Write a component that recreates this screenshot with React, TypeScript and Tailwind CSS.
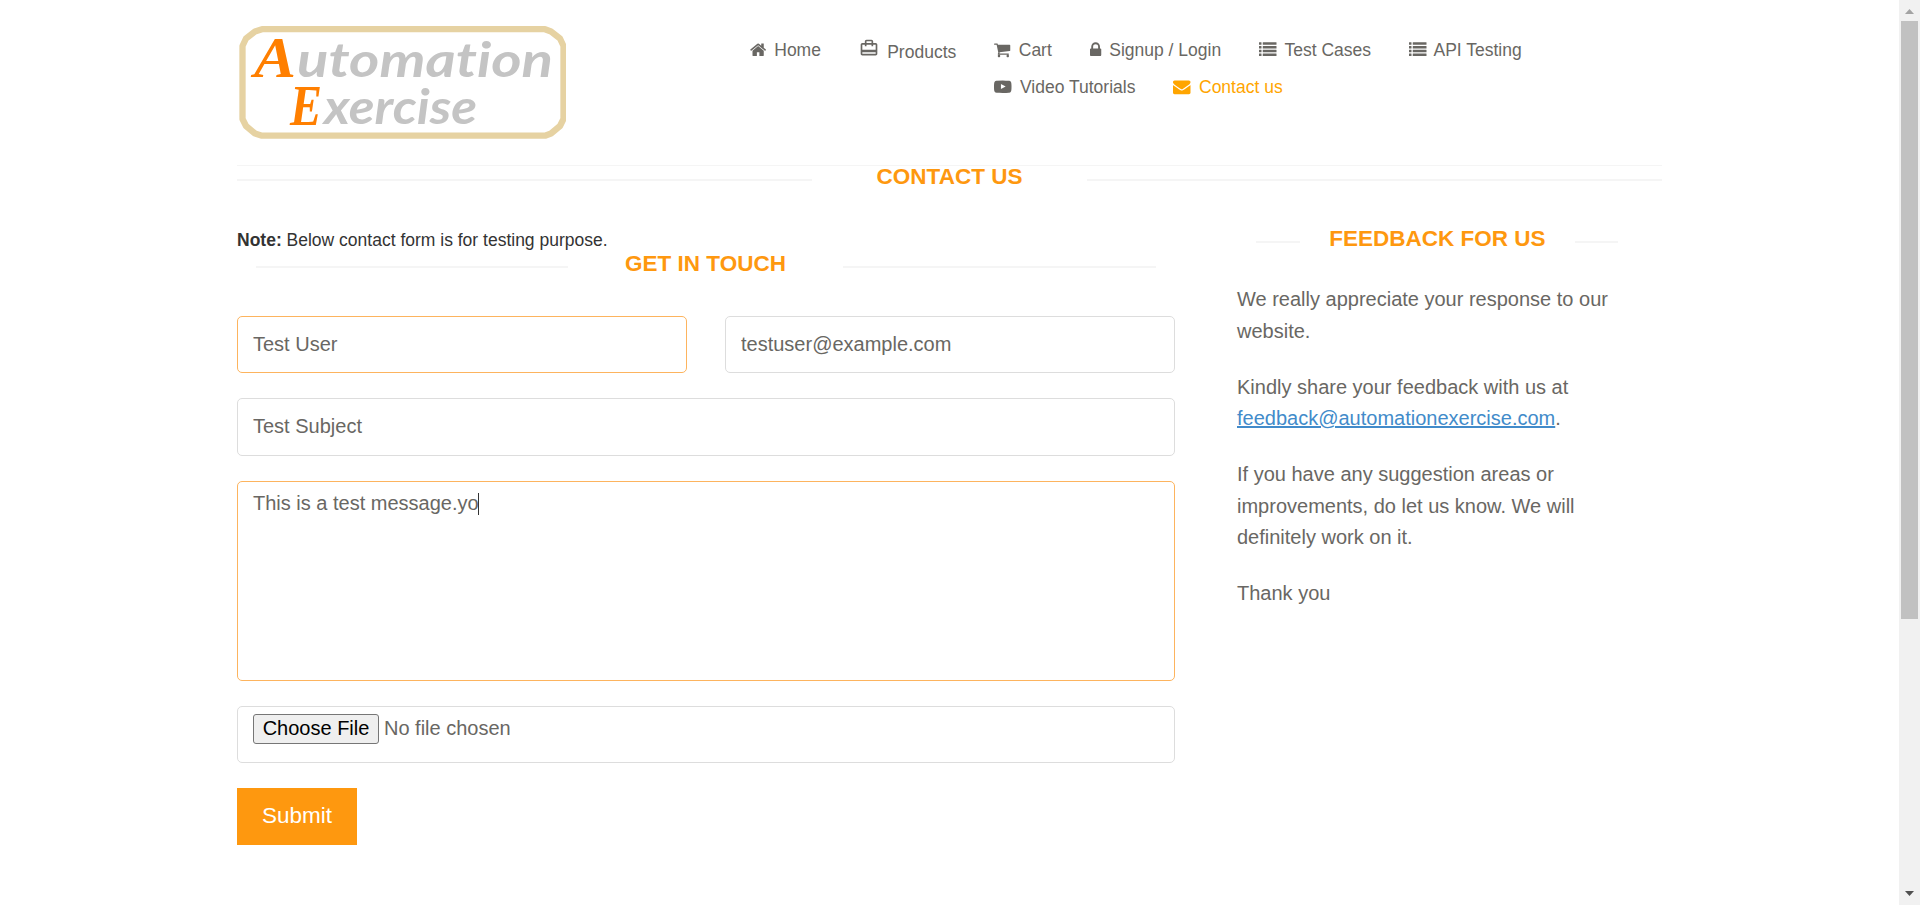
import type { ReactNode } from "react";

function Glyph({ x, w, children }: { x: number; w: number; children: ReactNode }) {
  return (
    <svg
      viewBox={`${x} 0 ${w} 1792`}
      className="h-[17.5px] shrink-0 overflow-visible"
      style={{ width: (w / 1792) * 17.5 }}
      fill="currentColor"
    >
      {children}
    </svg>
  );
}

const HomeIcon = () => (
  <Glyph x={0} w={1664}>
    <path d="M1408 992v480q0 26-19 45t-45 19h-384v-384h-256v384h-384q-26 0-45-19t-19-45v-480q0-1 .5-3t.5-3l575-474 575 474q1 2 1 6zm223-69l-62 74q-8 9-21 11h-3q-13 0-21-7l-692-577-692 577q-12 8-24 7-13-2-21-11l-62-74q-8-10-7-23.5t11-21.5l719-599q32-26 76-26t76 26l244 204v-195q0-14 9-23t23-9h192q14 0 23 9t9 23v408l219 182q10 8 11 21.5t-7 23.5z" />
  </Glyph>
);

const TravelIcon = () => (
  <svg viewBox="0 0 24 24" className="-mt-[3px] size-5 shrink-0" fill="currentColor">
    <path d="M20 6h-3V4c0-1.11-.89-2-2-2H9c-1.11 0-2 .89-2 2v2H4c-1.11 0-2 .89-2 2v11c0 1.11.89 2 2 2h16c1.11 0 2-.89 2-2V8c0-1.11-.89-2-2-2zM9 4h6v2H9V4zm11 15H4v-2h16v2zm0-5H4V8h3v2h2V8h6v2h2V8h3v6z" />
  </svg>
);

const CartIcon = () => (
  <Glyph x={64} w={1664}>
    <path d="M704 1536q0 52-38 90t-90 38-90-38-38-90 38-90 90-38 90 38 38 90zm896 0q0 52-38 90t-90 38-90-38-38-90 38-90 90-38 90 38 38 90zm128-1088v512q0 24-16.5 42.5t-40.5 21.5l-1044 122q13 60 13 70 0 16-24 64h920q26 0 45 19t19 45-19 45-45 19h-1024q-26 0-45-19t-19-45q0-11 8-31.5t16-36 21.5-40 15.5-29.5l-177-823h-204q-26 0-45-19t-19-45 19-45 45-19h256q16 0 28.5 6.5t19.5 15.5 13 24.5 8 26 5.5 29.5 4.5 26h1201q26 0 45 19t19 45z" />
  </Glyph>
);

const LockIcon = () => (
  <Glyph x={320} w={1152}>
    <path d="M640 768h512v-192q0-106-75-181t-181-75-181 75-75 181v192zm832 96v576q0 40-28 68t-68 28h-960q-40 0-68-28t-28-68v-576q0-40 28-68t68-28h32v-192q0-184 132-316t316-132 316 132 132 316v192h32q40 0 68 28t28 68z" />
  </Glyph>
);

const ListIcon = () => (
  <Glyph x={0} w={1792}>
    {[128, 512, 896, 1280].map((y) => (
      <g key={y}>
        <rect x="0" y={y} width="256" height="256" rx="32" />
        <rect x="384" y={y} width="1408" height="256" rx="32" />
      </g>
    ))}
  </Glyph>
);

const VideoIcon = () => (
  <Glyph x={0} w={1792}>
    <path d="M711 1128l484-250-484-253v503zm185-862q168 0 324.5 4.5t229.5 9.5l73 4q1 0 17 1.5t23 3 23.5 4.5 28.5 8 28 13 31 19.5 29 26.5q6 6 15.5 18.5t29 58.5 26.5 101q8 64 12.5 136.5t5.5 113.5v176q1 145-18 290-7 55-25 99.5t-32 61.5l-14 17q-14 15-29 26.5t-31 19-28 12.5-28.5 8-24 4.5-23 3-16.5 1.5q-251 19-627 19-207-2-359.5-6.5t-200.5-7.5l-49-4-36-4q-36-5-54.5-10t-51-21-56.5-41q-6-6-15.5-18.5t-29-58.5-26.5-101q-8-64-12.5-136.5t-5.5-113.5v-176q-1-145 18-290 7-55 25-99.5t32-61.5l14-17q14-15 29-26.5t31-19.5 28-13 28.5-8 23.5-4.5 23-3 17-1.5q251-18 627-18z" />
  </Glyph>
);

const EnvelopeIcon = () => (
  <Glyph x={0} w={1792}>
    <path d="M1792 710v794q0 66-47 113t-113 47h-1472q-66 0-113-47t-47-113v-794q44 49 101 87 362 246 497 345 57 42 92.5 65.5t94.5 48 110 24.5h2q51 0 110-24.5t94.5-48 92.5-65.5q170-123 498-345 57-39 100-87zm0-294q0 79-49 151t-122 123q-376 261-468 325-10 7-42.5 31t-54 38.5-52 32.5-57.5 27-50 9h-2q-23 0-50-9t-57.5-27-52-32.5-54-38.5-42.5-31q-91-64-262-182.5t-205-142.5q-62-42-117-115.5t-55-136.5q0-78 41.5-130t118.5-52h1472q65 0 112.5 47t47.5 113z" />
  </Glyph>
);

function Logo() {
  return (
    <svg viewBox="237 20 329 124" className="mr-px h-[124px] w-[329px] shrink-0" role="img">
      <path
        d="M262 29.200H545L551 31.500L560 38.500L563.500 46V119L560 126L551 133.500L545 135.700H262L255 133.500L246 126L242.500 119V46L246 38.500L255 31.500Z"
        fill="#fff"
        stroke="#e6d2a2"
        strokeWidth="6.300"
        strokeLinejoin="round"
      />
      <g fill="#c4c4c4" className="font-['Lato',sans-serif] text-[47px] font-bold italic [font-variant-ligatures:none]">
        <text x="297" y="77" textLength="256" lengthAdjust="spacingAndGlyphs">utomation</text>
        <text x="324" y="123.500" textLength="153" lengthAdjust="spacingAndGlyphs">xercise</text>
      </g>
      <g fill="#ff7f00" className="font-['Liberation_Serif',serif] text-[58px] font-bold italic">
        <text x="254" y="77" textLength="42" lengthAdjust="spacingAndGlyphs">A</text>
        <text x="290" y="125" textLength="32" lengthAdjust="spacingAndGlyphs">E</text>
      </g>
    </svg>
  );
}

function NavItem({ icon, label, className }: { icon: ReactNode; label: string; className: string }) {
  return (
    <li className={`flex shrink-0 items-start whitespace-nowrap ${className}`}>
      <span className="pt-[3.5px]">{icon}</span>
      <a className="leading-[25px]">{label}</a>
    </li>
  );
}

function Heading({ children, className, left, right }: { children: ReactNode; className: string; left: string; right: string }) {
  return (
    <div className={`flex h-[22px] justify-between ${className}`}>
      <span className={`mt-[13px] h-0.5 bg-[#f5f5f5] ${left}`} />
      <h2 className="text-[22.5px] leading-[22px] font-bold whitespace-nowrap text-[#fe980f]">{children}</h2>
      <span className={`mt-[13px] h-0.5 bg-[#f5f5f5] ${right}`} />
    </div>
  );
}

const field = "block rounded-[5px] border bg-white px-[15px] text-[20px] text-[#696763] outline-none";

export default function App() {
  return (
    <div className="flex h-[905px] w-full overflow-hidden bg-white font-['Liberation_Sans',Arial,sans-serif] text-[17.5px] text-[#696763]">
      <div className="w-[1899px] pl-[237px]">
        <header className="flex h-[165px] w-[1425px] pt-5">
          <Logo />
          <nav className="ml-[182.500px] pt-[17.5px]">
            <ul className="flex h-[37px]">
              <NavItem icon={<HomeIcon />} label="Home" className="w-[109px] gap-[8.500px]" />
              <NavItem
                icon={<TravelIcon />}
                label="Products"
                className="w-[135.500px] gap-[8.700px] [&>a]:mt-[2px]"
              />
              <NavItem icon={<CartIcon />} label="Cart" className="w-[95.500px] gap-[8.500px]" />
              <NavItem icon={<LockIcon />} label="Signup / Login" className="w-[169px] gap-[8.500px]" />
              <NavItem icon={<ListIcon />} label="Test Cases" className="w-[150px] gap-[8.500px]" />
              <NavItem icon={<ListIcon />} label="API Testing" className="gap-[7.500px]" />
            </ul>
            <ul className="flex pl-[244.500px]">
              <NavItem icon={<VideoIcon />} label="Video Tutorials" className="w-[178.500px] gap-[8.500px]" />
              <NavItem icon={<EnvelopeIcon />} label="Contact us" className="gap-[9px] text-[#ffa500]" />
            </ul>
          </nav>
        </header>
        <main className="w-[1425px] border-t border-[#f5f5f5]">
          <Heading className="w-full" left="w-[575px]" right="w-[575px]">CONTACT US</Heading>
          <div className="flex pt-[39px]">
            <section className="w-[938px]">
              <p className="h-[25px] pt-px leading-[25px] text-[#333]">
                <b>Note:</b> Below contact form is for testing purpose.
              </p>
              <Heading className="mt-px w-full px-[19px]" left="w-[312px]" right="w-[313px]">GET IN TOUCH</Heading>
              <form className="mt-[41px] flex flex-col items-start">
                <div className="flex w-full justify-between">
                  <input className={`${field} h-[57px] w-[450px] border-[#fdb45e]`} defaultValue="Test User" />
                  <input className={`${field} h-[57px] w-[450px] border-[#ddd]`} defaultValue="testuser@example.com" />
                </div>
                <input className={`${field} mt-[25px] h-[58px] w-full border-[#ddd] pb-0.5`} defaultValue="Test Subject" />
                <div className={`${field} mt-[25px] h-[200px] w-full border-[#fdb45e] pt-[7px]`}>
                  <div className="flex items-start leading-[29px]">
                    This is a test message.yo
                    <span className="-ml-px mt-1 h-[22px] w-px bg-[#333]" />
                  </div>
                </div>
                <div className={`${field} mt-[25px] flex h-[57px] w-full items-start border-[#ddd] pt-[7px]`}>
                  <button type="button" className="h-[30px] w-[126px] rounded-[3px] border border-[#767676] bg-[#efefef] pb-0.5 leading-[26px] text-black">
                    Choose File
                  </button>
                  <span className="ml-[5px] leading-[29px]">No file chosen</span>
                </div>
                <button type="button" className="mt-[25px] h-[57px] w-[120px] bg-[#fe980f] pb-0.5 text-[22.5px] text-white">
                  Submit
                </button>
              </form>
            </section>
            <aside className="ml-[62px] w-[400px] pt-px">
              <Heading className="ml-[19px] w-[362px]" left="w-[44px]" right="w-[43px]">FEEDBACK FOR US</Heading>
              <div className="mt-[34.300px] flex flex-col gap-[25px] text-[20px] leading-[31.250px]">
                <p>We really appreciate your response to our<br />website.</p>
                <p>
                  Kindly share your feedback with us at<br />
                  <a className="text-[#428bca] underline">feedback@automationexercise.com</a>.
                </p>
                <p>
                  If you have any suggestion areas or<br />improvements, do let us know. We will<br />definitely work on it.
                </p>
                <p>Thank you</p>
              </div>
            </aside>
          </div>
        </main>
      </div>
      <div className="flex w-[21px] flex-col items-center justify-between bg-[#f1f1f1]">
        <svg viewBox="0 0 21 21" className="size-[21px]" fill="#a3a3a3"><path d="M6 14L10.500 9L15 14z" /></svg>
        <div className="h-[598px] w-[17px] bg-[#c1c1c1]" />
        <div className="flex-1" />
        <svg viewBox="0 0 21 21" className="size-[21px]" fill="#505050"><path d="M6 7L10.500 12L15 7z" /></svg>
      </div>
    </div>
  );
}
